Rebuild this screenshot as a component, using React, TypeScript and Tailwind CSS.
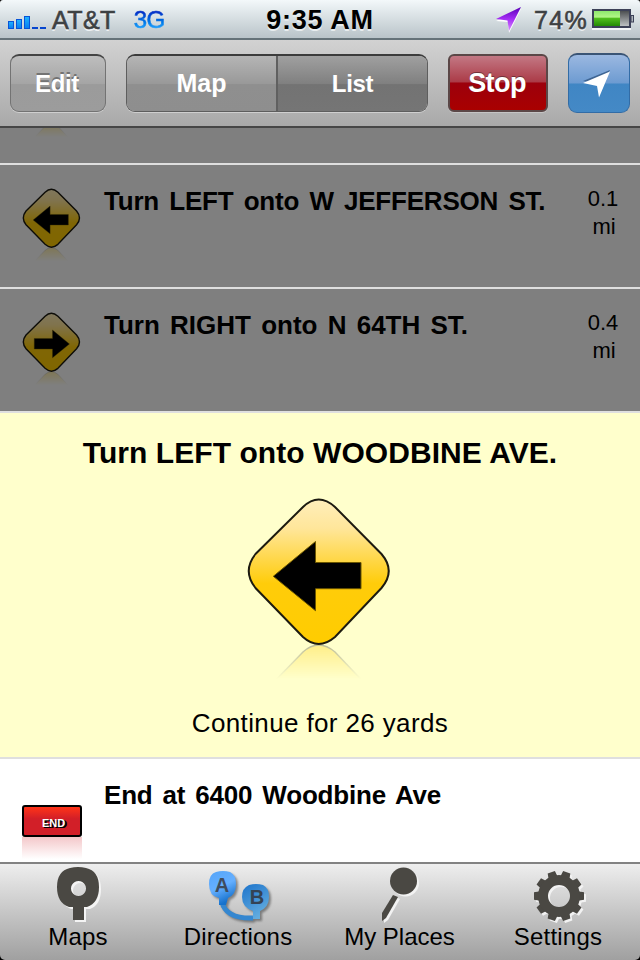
import React from 'react';

type Direction = 'left' | 'right';

const DIAMOND =
  'M55 8 Q70.5 -7 87 8 L133.5 55 Q148 72 133.5 89 L87 138 Q70.5 152 55 138 L7.5 89 Q-6 72 7.5 55 Z';
const ARROW = 'M25.3 77.3 L67.5 42.5 V63.5 H113 V89.7 H67.5 V111.7 Z';

const TurnSign = ({ id, direction, outline = 3.5, className }: { id: string; direction: Direction; outline?: number; className: string }) => (
  <svg viewBox="0 0 142 182" className={`overflow-visible ${className}`}>
    <defs>
      <linearGradient id={`${id}-fill`} x1="0" y1="0" x2="0" y2="1">
        <stop offset="0" stopColor="#ffeebb" />
        <stop offset="0.2" stopColor="#ffe69a" />
        <stop offset="0.58" stopColor="#ffcc0a" />
        <stop offset="1" stopColor="#ffcc00" />
      </linearGradient>
      <linearGradient id={`${id}-fade`} x1="0" y1="145" x2="0" y2="180" gradientUnits="userSpaceOnUse">
        <stop offset="0" stopColor="#fff" stopOpacity="0.34" />
        <stop offset="1" stopColor="#fff" stopOpacity="0" />
      </linearGradient>
      <mask id={`${id}-mask`} maskUnits="userSpaceOnUse" x="0" y="145" width="142" height="37">
        <rect x="0" y="145" width="142" height="37" fill={`url(#${id}-fade)`} />
      </mask>
    </defs>
    <g mask={`url(#${id}-mask)`}>
      <path d={DIAMOND} transform="translate(0 291) scale(1 -1)" fill="#ffcc00" stroke="#333" strokeWidth="1.5" />
    </g>
    <path d={DIAMOND} fill={`url(#${id}-fill)`} stroke="#1c1a10" strokeWidth={outline} />
    <path d={ARROW} transform={direction === 'right' ? 'translate(141 0) scale(-1 1)' : undefined} fill="#000" stroke="#6b5600" strokeWidth="1" />
  </svg>
);

const steps: { id: string; direction: Direction; text: string; distance: string; spacing: string }[] = [
  { id: 'jefferson', direction: 'left', text: 'Turn LEFT onto W JEFFERSON ST.', distance: '0.1', spacing: 'tracking-[-0.2px] [word-spacing:3.2px]' },
  { id: '64th', direction: 'right', text: 'Turn RIGHT onto N 64TH ST.', distance: '0.4', spacing: '[word-spacing:3px]' },
];

const StatusBar = () => (
  <div className="flex h-[40px] shrink-0 items-center border-b-2 border-[#657379] bg-gradient-to-b from-[#f3f8fa] to-[#b9c4c9]">
    <div className="flex w-[220px] items-center pl-[8px]">
      <svg width="38" height="14" viewBox="0 0 38 14" className="mt-[5px]">
        <defs>
          <linearGradient id="signal" x1="0" y1="0" x2="0" y2="1">
            <stop offset="0" stopColor="#20b4ff" />
            <stop offset="1" stopColor="#087cf0" />
          </linearGradient>
        </defs>
        <g fill="url(#signal)" stroke="#0754d8" strokeWidth="1">
          <rect x="0.5" y="6.5" width="5" height="7" />
          <rect x="8.5" y="4.5" width="5" height="9" />
          <rect x="16.5" y="1.5" width="5" height="12" />
        </g>
        <path d="M24 13H30M32 13H38" stroke="#0646cf" strokeWidth="2" />
      </svg>
      <span className="mt-[2px] ml-[6px] text-[25px] leading-[30px] tracking-[0.4px] text-[#3e4143] [-webkit-text-stroke:0.6px_#3e4143] [text-shadow:0_2px_0_#eef2f4]">AT&amp;T</span>
      <span className="mt-[2px] ml-[18px] bg-gradient-to-b from-[#0330c8] from-25% to-[#25a5ff] to-80% bg-clip-text text-[24px] leading-[30px] tracking-[-0.5px] text-transparent [-webkit-text-stroke:0.6px_transparent]">3G</span>
    </div>
    <div className="mt-[2px] flex-1 text-center text-[27px] leading-[30px] font-bold tracking-[0.7px] whitespace-nowrap text-black [text-shadow:0_2px_0_#e8edef]">9:35 AM</div>
    <div className="flex w-[220px] items-center justify-end pr-[6px]">
      <svg width="26" height="26" viewBox="0 0 26 26" className="mt-[2px] mr-[12px]">
        <defs>
          <linearGradient id="locate" x1="0" y1="0" x2="0" y2="1">
            <stop offset="0" stopColor="#5a00b8" />
            <stop offset="0.5" stopColor="#a52df5" />
            <stop offset="1" stopColor="#d78cff" />
          </linearGradient>
        </defs>
        <path d="M25 2 L13 26 L12 15 L0 14 Z" fill="#fff" />
        <path d="M25 0 L13 24 L11.500 13.500 L0 12 Z" fill="url(#locate)" />
      </svg>
      <span className="mt-px mr-[4px] text-[25px] leading-[30px] tracking-[1.3px] text-[#3e4143] [-webkit-text-stroke:0.6px_#3e4143] [text-shadow:0_2px_0_#eef2f4]">74%</span>
      <svg width="42" height="22" viewBox="0 0 42 22">
        <defs>
          <linearGradient id="charge" x1="0" y1="0" x2="0" y2="1">
            <stop offset="0" stopColor="#8de86c" />
            <stop offset="0.4" stopColor="#b0f586" />
            <stop offset="0.5" stopColor="#4fbd1c" />
            <stop offset="1" stopColor="#238a04" />
          </linearGradient>
          <linearGradient id="drained" x1="0" y1="0" x2="0" y2="1">
            <stop offset="0" stopColor="#45484a" />
            <stop offset="1" stopColor="#c4c8ca" />
          </linearGradient>
        </defs>
        <rect x="0" y="20" width="39" height="2" fill="#f3f6f7" />
        <rect x="1" y="2" width="37" height="17" fill="url(#drained)" stroke="#3c4158" strokeWidth="2" />
        <rect x="2" y="3" width="26" height="15" fill="url(#charge)" />
        <rect x="39" y="7.5" width="2.5" height="6.5" fill="#aeb6bc" stroke="#3c4158" />
      </svg>
    </div>
  </div>
);

const Toolbar = () => (
  <div className="flex h-[88px] shrink-0 items-start border-b-2 border-[#464646] bg-gradient-to-b from-[#d2d2d2] to-[#a9a9a9] px-[10px] pt-[13px] text-[25px] font-bold text-white">
    <button className="mt-px h-[58px] w-[96px] rounded-[9px] border border-t-2 border-[#737373] border-t-[#444] bg-[linear-gradient(#bebebe,#a5a5a5_50%,#9b9b9b_52%,#9c9c9c)] pr-[2px] text-[24px] tracking-[-0.3px] shadow-[0_1px_0_#cfcfcf] [text-shadow:0_-2px_0_#737373]">
      Edit
    </button>
    <div className="mt-px ml-[20px] flex h-[58px] w-[302px] overflow-hidden rounded-[9px] border border-t-2 border-[#5e5e5e] border-t-[#3c3c3c] shadow-[0_1px_0_#cfcfcf] [text-shadow:0_-2px_0_#626262]">
      <button className="w-[149px] bg-[linear-gradient(#b5b5b5,#999_50%,#8f8f8f_52%,#8e8e8e)]">Map</button>
      <button className="flex-1 border-l-2 border-[#606060] bg-[linear-gradient(#a0a0a0,#808080_50%,#737373_52%,#757575)] text-[24px] tracking-[-0.3px]">List</button>
    </div>
    <button className="mt-px ml-[20px] h-[58px] w-[100px] rounded-[6px] border-2 border-[#5b4747] bg-[linear-gradient(#c37884,#ab3b47_48%,#9c000c_50%,#a90000)] pr-[2px] text-[27px] tracking-[-0.6px] shadow-[0_1px_0_#c4c4c4] [text-shadow:0_-1px_0_#703038]">
      Stop
    </button>
    <button className="ml-[20px] flex h-[60px] w-[62px] items-center justify-center rounded-[9px] border border-t-2 border-[#326ca6] border-t-[#3a5475] bg-[linear-gradient(#9bb8e1,#6d9bd1_49%,#4086c4_51%,#4489c6)]">
      <svg width="28" height="28" viewBox="0 0 28 28" className="mr-[4px]">
        <path d="M27 0 L16 25 L14 13 L0 11 Z" fill="#3f6593" />
        <path d="M27 1.500 L16 27.500 L14 16 L0 13 Z" fill="#fff" />
      </svg>
    </button>
  </div>
);

const MapsIcon = () => (
  <svg width="48" height="56" viewBox="0 0 48 56">
    <g fill="#f4f4f4" transform="translate(2 2)">
      <path fillRule="evenodd" d="M14 1H33Q45 5 45 20Q45 36 34 40H30V53H19V40H15Q4 36 4 20Q4 5 14 1ZM24.500 14a7.500 7.500 0 1 0 .01 0Z" />
    </g>
    <path fillRule="evenodd" fill="#4a4843" d="M16 1Q24 -1 32 1Q45 4 45 20Q45 36 33 40H30V53H19V40H15Q3 36 3 20Q3 4 16 1ZM24.500 14a7.500 7.500 0 1 0 .01 0Z" />
  </svg>
);

const DirectionsIcon = () => (
  <svg width="64" height="56" viewBox="0 0 64 56">
    <defs>
      <linearGradient id="pin-a" x1="0" y1="0" x2="0.4" y2="1">
        <stop offset="0" stopColor="#55a5f8" />
        <stop offset="0.55" stopColor="#65afff" />
        <stop offset="1" stopColor="#1672cd" />
      </linearGradient>
      <linearGradient id="pin-b" x1="0" y1="0" x2="0.5" y2="1">
        <stop offset="0" stopColor="#1c73cb" />
        <stop offset="1" stopColor="#62acdf" />
      </linearGradient>
    </defs>
    <g className="drop-shadow-[2px_2px_1px_rgba(60,60,60,0.55)]">
      <path d="M13 31 Q17 48 44 47" fill="none" stroke="#3587d0" strokeWidth="5" />
      <path d="M7 1 Q14 -1 21 1 Q27 4 27 13 Q27 24 19 27 L17 34 H10 V27 Q0 25 0 13 Q0 3 7 1Z" fill="url(#pin-a)" />
      <path d="M40 14 Q47 12 54 14 Q60 17 60 26 Q60 36 51 40 V48 H44 V40 Q33 36 33 26 Q33 17 40 14Z" fill="url(#pin-b)" />
    </g>
    <text x="13" y="21" textAnchor="middle" fontSize="20" fontWeight="bold" fill="#3f4c5d">A</text>
    <text x="48" y="33" textAnchor="middle" fontSize="20" fontWeight="bold" fill="#344354">B</text>
  </svg>
);

const PlacesIcon = () => (
  <svg width="40" height="56" viewBox="0 0 40 56">
    <g transform="translate(2 2)" fill="#f2f2f2">
      <circle cx="23.500" cy="14" r="13.500" />
      <path d="M13 28 L18 30 L6 51 L2 54 V46Z" />
    </g>
    <circle cx="23.500" cy="14" r="13.500" fill="#4a4843" />
    <path d="M13 28 L18 30 L6 51 L2 54 V46Z" fill="#4a4843" />
  </svg>
);

const TEETH = [18, 54, 90, 126, 162, 198, 234, 270, 306, 342];

const Gear = ({ color }: { color: string }) => (
  <g fill={color}>
    {TEETH.map(angle => (
      <path key={angle} d="M-5 -17 L-3.800 -25 H3.800 L5 -17Z" transform={`rotate(${angle})`} />
    ))}
    <circle r="16" fill="none" stroke={color} strokeWidth="10" />
  </g>
);

const SettingsIcon = () => (
  <svg width="54" height="54" viewBox="-26 -26 54 54">
    <g transform="translate(2 2)">
      <Gear color="#f2f2f2" />
    </g>
    <Gear color="#4a4843" />
  </svg>
);

const tabs = [
  { label: 'Maps', icon: <MapsIcon />, pad: 'pt-[3px]', spacing: 'tracking-[0.2px]', shift: 'pr-[4px]' },
  { label: 'Directions', icon: <DirectionsIcon />, pad: 'pt-[7px] pl-[5px]', spacing: 'tracking-[0.2px]', shift: 'pr-[4px]' },
  { label: 'My Places', icon: <PlacesIcon />, pad: 'pt-[3px]', spacing: '', shift: 'pr-[1px]' },
  { label: 'Settings', icon: <SettingsIcon />, pad: 'pt-[6px] pl-[3px]', spacing: 'tracking-[0.2px]', shift: 'pr-[4px]' },
];

const TabBar = () => (
  <div className="grid h-[98px] shrink-0 grid-cols-4 border-t-2 border-[#828282] bg-gradient-to-b from-[#eeeeee] to-[#a0a0a0]">
    {tabs.map(tab => (
      <div key={tab.label} className={`flex flex-col items-center ${tab.shift}`}>
        <div className={`flex h-[59px] items-start ${tab.pad}`}>{tab.icon}</div>
        <span className={`text-[24px] leading-[28px] whitespace-nowrap text-black ${tab.spacing}`}>{tab.label}</span>
      </div>
    ))}
  </div>
);

const App = () => (
  <div className="h-[960px] w-[640px] bg-black">
    <div className="flex h-full w-full flex-col overflow-hidden rounded-t-[3px] rounded-b-[5px] font-['Liberation_Sans',Arial,sans-serif] text-black">
      <StatusBar />
      <Toolbar />
      <div className="flex min-h-0 flex-1 flex-col overflow-hidden bg-white">
        {/* Previous step, scrolled almost out of view */}
        <div className="-mt-[87px] flex h-[124px] shrink-0 border-b-2 border-[#dfdfdf] bg-[#7f7f7f] pt-[24px] pl-[23px]">
          <TurnSign id="previous" direction="left" className="h-[73px] w-[57px] brightness-50" />
        </div>

        {steps.map(step => (
          <div key={step.id} className="flex h-[124px] shrink-0 border-b-2 border-[#dfdfdf] bg-[#7f7f7f] pt-[24px] pr-[17px] pl-[23px]">
            <TurnSign id={step.id} direction={step.direction} className="h-[73px] w-[57px] shrink-0 brightness-50" />
            <div className={`-mt-[4px] ml-[24px] flex-1 text-[26px] leading-[32px] font-bold whitespace-nowrap ${step.spacing}`}>{step.text}</div>
            <div className="-mt-[4px] w-[40px] text-center text-[22px] leading-[28px]">
              {step.distance}
              <br />
              <span className="pl-[2px]">mi</span>
            </div>
          </div>
        ))}

        <div className="flex h-[346px] shrink-0 flex-col items-center border-b-2 border-[#dfdfdf] bg-[#ffffcc] pt-[22px]">
          <div className="text-[30px] leading-[36px] font-bold tracking-[0.06px] whitespace-nowrap">Turn LEFT onto WOODBINE AVE.</div>
          <TurnSign id="current" direction="left" outline={2} className="mt-[28px] mr-[2px] h-[182px] w-[142px]" />
          <div className="mt-[26px] text-[26px] leading-[32px] tracking-[0.37px] whitespace-nowrap">Continue for 26 yards</div>
        </div>

        <div className="flex flex-1 pl-[22px]">
          <div className="mt-[46px] w-[60px]">
            <div className="flex h-[32px] items-center justify-center rounded-[3px] border-2 border-black bg-[linear-gradient(#ff3418,#d21f28_42%,#d21f28)] pt-[4px] pl-[3px] text-[11px] leading-none font-bold text-white [text-shadow:1px_1px_0_#000,2px_1px_0_#000]">
              END
            </div>
            <div className="h-[22px] bg-gradient-to-b from-[#f3c8ca] to-white" />
          </div>
          <div className="mt-[20px] ml-[22px] text-[26px] leading-[32px] font-bold tracking-[-0.2px] whitespace-nowrap [word-spacing:3px]">End at 6400 Woodbine Ave</div>
        </div>
      </div>
      <TabBar />
    </div>
  </div>
);

export default App;
